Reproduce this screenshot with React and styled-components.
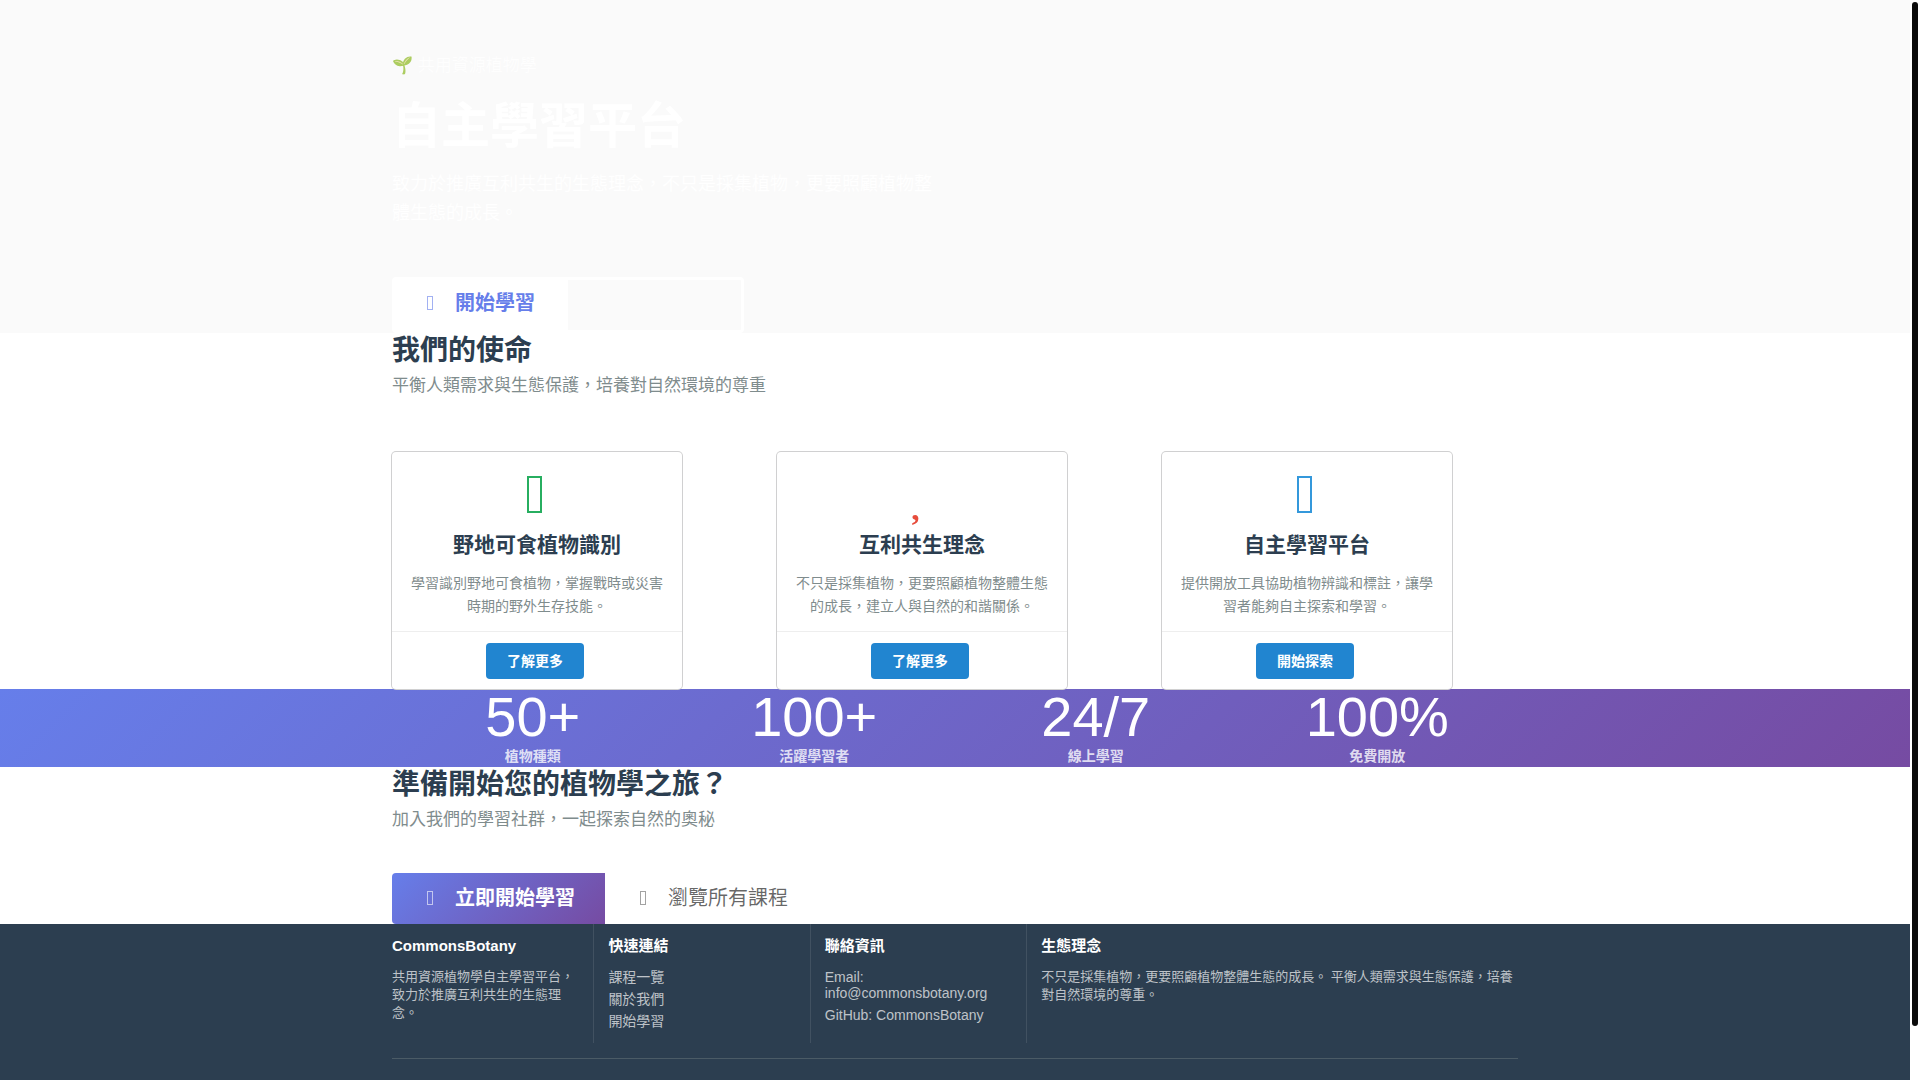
import React from "react";
import styled, {createGlobalStyle, css} from "styled-components";

const PRIMARY = "#667eea";
const GRADIENT = "linear-gradient(135deg, #667eea 0%, #764ba2 100%)";
const DARK = "#2c3e50";
const MUTED = "#7f8c8d";

const GlobalStyle = createGlobalStyle`
    *, *::before, *::after {
        box-sizing: border-box;
    }

    body {
        margin: 0;
        background: #fff;
        color: rgba(0,0,0,0.87);
        font-family: "Liberation Sans", "Noto Sans CJK TC", sans-serif;
        font-size: 14px;
    }

    h1, h2, h3, h4, p, ul {
        margin: 0;
        padding: 0;
    }

    a {
        text-decoration: none;
    }
`;

const Layout = styled.div`
    display: grid;
    grid-template-columns: minmax(0, 1fr) 10px;
    min-height: 100vh;
`;

const Page = styled.div`
    display: flex;
    flex-direction: column;
`;

const Rail = styled.div`
    background: #fff;
    height: 100vh;
    padding: 2px 2px 0;
`;

const Thumb = styled.div`
    height: 95%;
    border-radius: 5px;
    background: #0b0b0b;
`;

const Container = styled.div`
    width: 100%;
    max-width: 1126px;
    margin: 0 auto;
`;

const Hero = styled.header`
    background: #fafafa;
    color: #fff;
    padding-top: 57px;
`;

const Brand = styled.p`
    font-size: 17px;
    line-height: 18px;
    opacity: 0.8;
`;

const HeroTitle = styled.h1`
    font-size: 49px;
    line-height: 63px;
    margin-top: 20px;
`;

const HeroText = styled.p`
    max-width: 550px;
    font-size: 18px;
    line-height: 29px;
    margin: 12px 0 49px;
`;

const Buttons = styled.div`
    display: flex;
`;

const variants = {
    white: css`
        padding-top: 16px;
        background: #fff;
        color: ${PRIMARY};
        font-weight: 700;
        border-radius: 4px 0 0 4px;
    `,
    outline: css`
        padding: 15px 30px;
        border: 3px solid #fff;
        color: #fafafa;
        font-weight: 700;
        border-radius: 0 4px 4px 0;
    `,
    gradient: css`
        background: ${GRADIENT};
        color: #fff;
        font-weight: 700;
        border-radius: 4px 0 0 4px;
    `,
    plain: css`
        color: rgba(0,0,0,0.6);
        border-radius: 0 4px 4px 0;
    `
};

const BigButton = styled.a`
    display: flex;
    align-items: flex-start;
    padding: 15px 30px 16px;
    font-size: 20px;
    line-height: 20px;
    ${props => variants[props.$variant]}
`;

const ButtonIcon = styled.svg`
    flex: none;
    width: 24px;
    height: 20px;
    margin: 0 13px 0 -4px;
    opacity: 0.6;
`;

const CardIcon = styled.div`
    height: 56px;
    margin: 0 4px 9px 0;
    color: ${props => props.$color};
    font-family: "Liberation Serif", serif;
    font-size: 56px;
    line-height: 56px;

    svg {
        display: block;
        width: 56px;
        height: 56px;
        margin: 0 auto;
    }
`;

const SectionTitle = styled.h2`
    color: ${DARK};
    font-size: 28px;
    line-height: 36px;
`;

const SectionText = styled.p`
    color: ${MUTED};
    font-size: 17px;
    line-height: 21px;
    margin-top: 6px;
`;

const Cards = styled.div`
    display: grid;
    grid-template-columns: repeat(3, 1fr);
    margin: 56px -29px 0 0;
`;

const StyledCard = styled.article`
    position: relative;
    width: 290px;
    background: #fff;
    border-radius: 4px;
    box-shadow: 0 0 0 1px #d0d0d1;
    text-align: center;
`;

const CardBody = styled.div`
    padding: 14px 14px 13px;
`;

const CardTitle = styled.h3`
    color: ${DARK};
    font-size: 21px;
    line-height: 27px;
`;

const CardText = styled.p`
    color: ${MUTED};
    line-height: 23px;
    margin-top: 14px;
`;

const CardExtra = styled.div`
    border-top: 1px solid rgba(34,36,38,0.08);
    padding: 11px 14px 10px;
`;

const CardButton = styled.a`
    display: inline-block;
    vertical-align: top;
    margin-right: 4px;
    background: #2185d0;
    border-radius: 4px;
    color: #fff;
    font-weight: 700;
    line-height: 14px;
    padding: 11px 21px;
`;

const Stats = styled.section`
    background: ${GRADIENT};
    color: #fff;
`;

const StatsGrid = styled(Container)`
    display: grid;
    grid-template-columns: repeat(4, 1fr);
    text-align: center;
`;

const StatValue = styled.div`
    font-size: 56px;
    line-height: 56px;
`;

const StatLabel = styled.div`
    color: rgba(255,255,255,0.8);
    font-weight: 700;
    line-height: 22px;
`;

const CtaButtons = styled(Buttons)`
    margin-top: 43px;
`;

const Footer = styled.footer`
    flex: 1;
    background: ${DARK};
    color: rgba(255,255,255,0.7);
`;

const FooterGrid = styled.div`
    display: grid;
    grid-template-columns: 3fr 3fr 3fr 7fr;
    margin: 0 -14px;
`;

const FooterColumn = styled.div`
    padding: 14px;

    & + & {
        box-shadow: -1px 0 0 0 rgba(255,255,255,0.1);
    }
`;

const FooterTitle = styled.h4`
    color: #fff;
    font-size: 15px;
    line-height: 16px;
    margin-bottom: 14px;
`;

const FooterText = styled.p`
    font-size: 13px;
    line-height: 18px;
`;

const FooterList = styled.ul`
    display: grid;
    gap: 6px;
    padding-top: 1px;
    line-height: 16px;
    list-style: none;

    a {
        color: inherit;
    }
`;

const Divider = styled.div`
    margin-top: 15px;
    border-top: 1px solid #4b5b66;
`;

const cards = [
    {color: "#27ae60", title: "野地可食植物識別", text: "學習識別野地可食植物，掌握戰時或災害時期的野外生存技能。", action: "了解更多"},
    {icon: "\uf004", color: "#e74c3c", title: "互利共生理念", text: "不只是採集植物，更要照顧植物整體生態的成長，建立人與自然的和諧關係。", action: "了解更多"},
    {color: "#3498db", title: "自主學習平台", text: "提供開放工具協助植物辨識和標註，讓學習者能夠自主探索和學習。", action: "開始探索"}
];

const stats = [
    {value: "50+", label: "植物種類"},
    {value: "100+", label: "活躍學習者"},
    {value: "24/7", label: "線上學習"},
    {value: "100%", label: "免費開放"}
];

const Card = ({icon, color, title, text, action}) => (
    <StyledCard>
        <CardBody>
            <CardIcon $color={color} aria-hidden="true">
                {icon || (
                    <svg viewBox="0 0 56 56" fill="none" stroke="currentColor" strokeWidth="2">
                        <rect x="21" y="11" width="13" height="35"/>
                    </svg>
                )}
            </CardIcon>
            <CardTitle>{title}</CardTitle>
            <CardText>{text}</CardText>
        </CardBody>
        <CardExtra>
            <CardButton href="#">{action}</CardButton>
        </CardExtra>
    </StyledCard>
);

const IconButton = ({variant, children}) => (
    <BigButton href="#" $variant={variant}>
        <ButtonIcon viewBox="0 0 24 20" fill="none" stroke="currentColor" aria-hidden="true">
            <rect x="9.5" y="3.5" width="5" height="13"/>
        </ButtonIcon>
        {children}
    </BigButton>
);

const App = () => (
    <Layout lang="zh-TW">
        <GlobalStyle/>
        <Page>
            <Hero>
                <Container>
                    <Brand>🌱 共用資源植物學</Brand>
                    <HeroTitle>自主學習平台</HeroTitle>
                    <HeroText>致力於推廣互利共生的生態理念，不只是採集植物，更要照顧植物整體生態的成長。</HeroText>
                    <Buttons>
                        <IconButton variant="white">開始學習</IconButton>
                        <IconButton variant="outline">了解更多</IconButton>
                    </Buttons>
                </Container>
            </Hero>
            <section>
                <Container>
                    <SectionTitle>我們的使命</SectionTitle>
                    <SectionText>平衡人類需求與生態保護，培養對自然環境的尊重</SectionText>
                    <Cards>
                        {cards.map(card => <Card key={card.title} {...card}/>)}
                    </Cards>
                </Container>
            </section>
            <Stats>
                <StatsGrid>
                    {stats.map(stat => (
                        <div key={stat.label}>
                            <StatValue>{stat.value}</StatValue>
                            <StatLabel>{stat.label}</StatLabel>
                        </div>
                    ))}
                </StatsGrid>
            </Stats>
            <section>
                <Container>
                    <SectionTitle>準備開始您的植物學之旅？</SectionTitle>
                    <SectionText>加入我們的學習社群，一起探索自然的奧秘</SectionText>
                    <CtaButtons>
                        <IconButton variant="gradient">立即開始學習</IconButton>
                        <IconButton variant="plain">瀏覽所有課程</IconButton>
                    </CtaButtons>
                </Container>
            </section>
            <Footer>
                <Container>
                    <FooterGrid>
                        <FooterColumn>
                            <FooterTitle>CommonsBotany</FooterTitle>
                            <FooterText>共用資源植物學自主學習平台，致力於推廣互利共生的生態理念。</FooterText>
                        </FooterColumn>
                        <FooterColumn>
                            <FooterTitle>快速連結</FooterTitle>
                            <FooterList>
                                <li><a href="#">課程一覽</a></li>
                                <li><a href="#">關於我們</a></li>
                                <li><a href="#">開始學習</a></li>
                            </FooterList>
                        </FooterColumn>
                        <FooterColumn>
                            <FooterTitle>聯絡資訊</FooterTitle>
                            <FooterList>
                                <li>Email: info@commonsbotany.org</li>
                                <li>GitHub: CommonsBotany</li>
                            </FooterList>
                        </FooterColumn>
                        <FooterColumn>
                            <FooterTitle>生態理念</FooterTitle>
                            <FooterText>不只是採集植物，更要照顧植物整體生態的成長。 平衡人類需求與生態保護，培養對自然環境的尊重。</FooterText>
                        </FooterColumn>
                    </FooterGrid>
                    <Divider/>
                </Container>
            </Footer>
        </Page>
        <Rail>
            <Thumb/>
        </Rail>
    </Layout>
);

export default App;
